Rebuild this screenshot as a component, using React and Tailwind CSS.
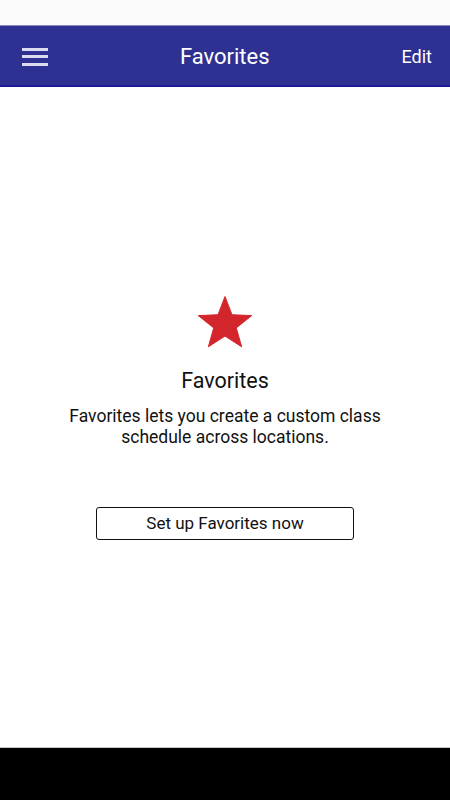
const Star = () => (
  <svg width="56" height="53" viewBox="-0.5 -0.5 56 53.5" className="block">
    <polygon
      points="27.5,1 34.55,19.4 54.5,20.3 38.91,32.71 44.3,51.8 27.5,41 10.7,51.8 16.09,32.71 0.5,20.3 20.45,19.4"
      fill="#d3262c"
      stroke="#d3262c"
      strokeWidth="1"
      strokeLinejoin="round"
    />
  </svg>
);

const App = () => {
  return (
    <div className="flex flex-col w-[450px] h-[800px] bg-white font-['Roboto','Noto_Sans',sans-serif]">
      {/* status bar */}
      <div className="h-[26px] bg-[#fafafa] border-b border-[#8c8cb4]"></div>

      {/* app bar */}
      <div className="flex items-center h-[61px] bg-[#2e3192] border-b-2 border-[#1a1aa0] px-[22px] pt-[2px]">
        <div className="flex flex-col gap-[4.5px] w-[26px]">
          <span className="block h-[3px] bg-[#dcdcf0]"></span>
          <span className="block h-[3px] bg-[#dcdcf0]"></span>
          <span className="block h-[3px] bg-[#dcdcf0]"></span>
        </div>
        <h1 className="flex-1 text-center text-white text-[22px] leading-[28px]">Favorites</h1>
        <button className="text-white text-[18px] leading-[28px] mr-[-4px]">Edit</button>
      </div>

      {/* content */}
      <div className="flex-1 flex flex-col items-center justify-center">
        <Star />
        <h2 className="mt-[19px] text-[21.5px] leading-[28px] text-[#111]">Favorites</h2>
        <p className="mt-[11px] text-center text-[17.5px] leading-[21px] text-[#111]">
          Favorites lets you create a custom class
          <br />
          schedule across locations.
        </p>
        <button className="mt-[59px] w-[258px] h-[33px] border border-[#111] rounded-[3px] text-[17px] text-[#111] pt-[2px]">
          Set up Favorites now
        </button>
      </div>

      {/* nav bar */}
      <div className="h-[53px] bg-black border-t border-[#c8c8c8]"></div>
    </div>
  );
};

export default App;
